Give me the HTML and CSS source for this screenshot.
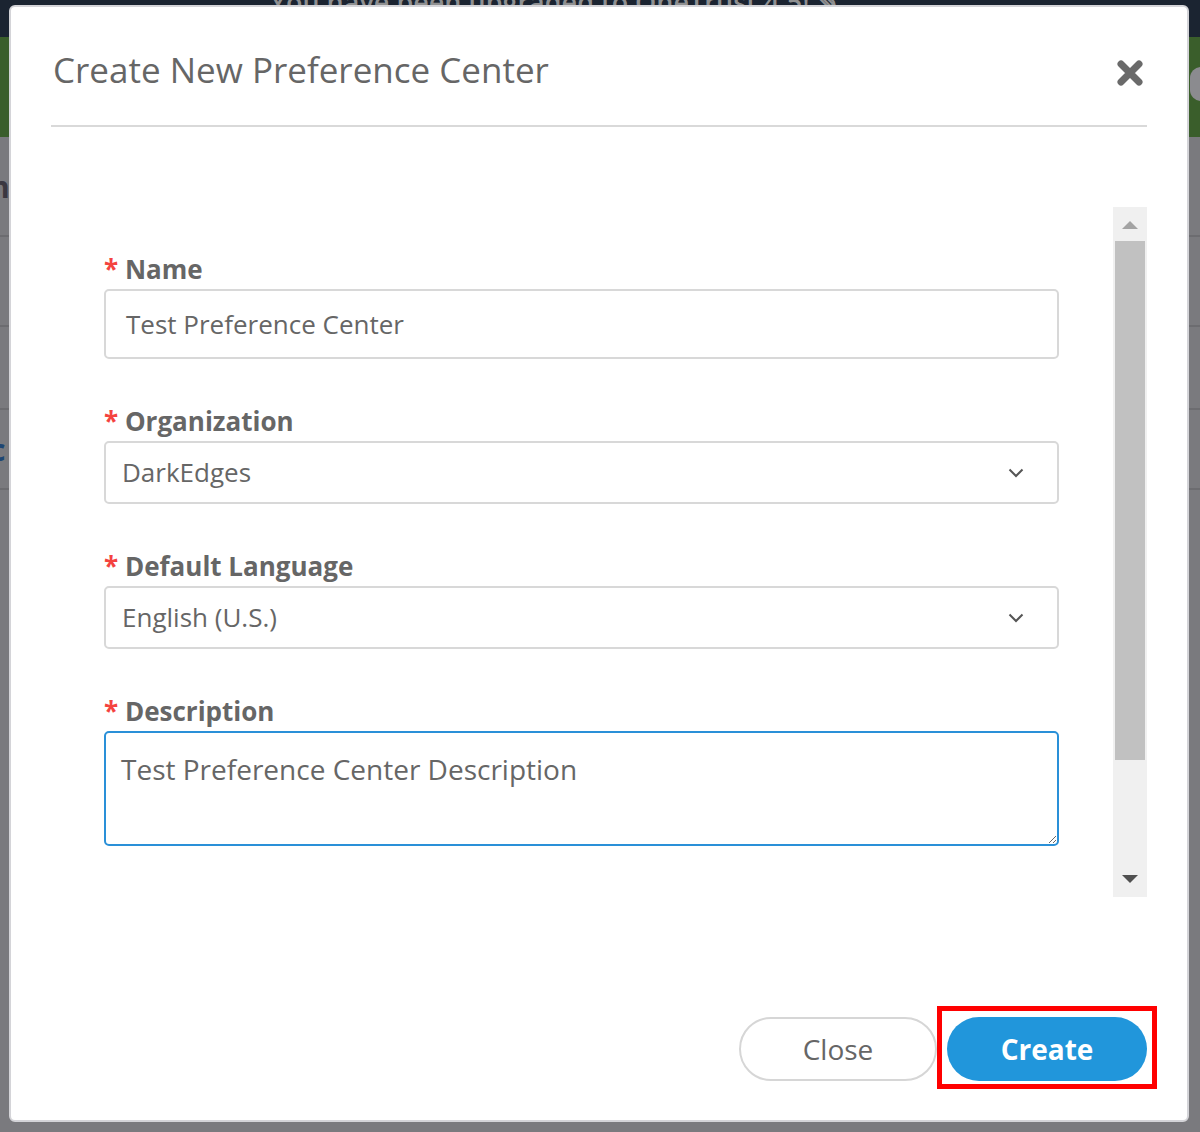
FILE: index.html
```html
<!DOCTYPE html>
<html lang="en">
<head>
<meta charset="utf-8">
<title>Create New Preference Center</title>
<link rel="stylesheet" href="styles.css">
</head>
<body>
<div class="page">
  <div class="topbar"><span class="notice">You have been upgraded to OneTrust 4.5! &#9998;</span></div>
  <div class="greenbar"><span class="user-icon"></span></div>
  <div class="row row-1"><span class="frag frag-n">n</span></div>
  <div class="row row-2"></div>
  <div class="row row-3"></div>
  <div class="row row-4"><span class="frag frag-c">c</span></div>
  <div class="rest"></div>
</div>

<div class="modal">
  <div class="modal-header">
    <h2 class="modal-title">Create New Preference Center</h2>
    <button class="close-x" aria-label="Close">
      <svg viewBox="0 0 26 26" width="26" height="26"><path d="M4 4 L22 22 M22 4 L4 22" stroke="#6a6a6a" stroke-width="7" stroke-linecap="round"/></svg>
    </button>
  </div>

  <div class="modal-body">
    <div class="form">
      <div class="field">
        <label class="field-label"><span class="req">*</span> Name</label>
        <div class="control control-input">Test Preference Center</div>
      </div>
      <div class="field">
        <label class="field-label"><span class="req">*</span> Organization</label>
        <div class="control control-select">DarkEdges
          <svg class="chevron" viewBox="0 0 16 10" width="16" height="10"><path d="M1.5 1.5 L8 8 L14.5 1.5" fill="none" stroke="#555" stroke-width="2"/></svg>
        </div>
      </div>
      <div class="field">
        <label class="field-label"><span class="req">*</span> Default Language</label>
        <div class="control control-select">English (U.S.)
          <svg class="chevron" viewBox="0 0 16 10" width="16" height="10"><path d="M1.5 1.5 L8 8 L14.5 1.5" fill="none" stroke="#555" stroke-width="2"/></svg>
        </div>
      </div>
      <div class="field">
        <label class="field-label"><span class="req">*</span> Description</label>
        <textarea class="control control-textarea">Test Preference Center Description</textarea>
      </div>
    </div>
    <div class="scrollbar">
      <span class="arrow-up"></span>
      <div class="thumb"></div>
      <span class="arrow-down"></span>
    </div>
  </div>

  <div class="modal-footer">
    <button class="btn btn-close">Close</button>
    <span class="highlight"><button class="btn btn-create">Create</button></span>
  </div>
</div>
</body>
</html>
```

FILE: styles.css
```css
* { box-sizing: border-box; }

html, body {
  margin: 0;
  padding: 0;
}

body {
  width: 1200px;
  height: 1132px;
  overflow: hidden;
  position: relative;
  font-family: "Open Sans", "Liberation Sans", sans-serif;
  background: #6f6e78;
}

/* ---------- dimmed page behind the modal ---------- */
.page {
  display: flex;
  flex-direction: column;
  height: 1132px;
}

.topbar {
  height: 37px;
  background: #1b2431;
  overflow: hidden;
  padding-left: 270px;
}

.notice {
  display: block;
  margin-top: -14px;
  font-size: 27px;
  font-weight: 600;
  color: #8f9091;
  white-space: nowrap;
  line-height: 32px;
}

.greenbar {
  height: 100px;
  background: #3a5e2b;
  position: relative;
}

.user-icon {
  position: absolute;
  left: 1190px;
  top: 30px;
  width: 22px;
  height: 34px;
  border-radius: 11px;
  background: #8b8b8f;
}

.row {
  background: #7a7a7e;
  border-bottom: 2px solid #6c6c70;
  overflow: hidden;
}

.row-1 { height: 100px; }
.row-2 { height: 90px; }
.row-3 { height: 83px; }
.row-4 { height: 80px; }

.rest {
  flex: 1;
  background: #7a7a7e;
}

.frag {
  display: block;
  font-size: 30px;
  font-weight: 700;
  line-height: 40px;
}

.frag-n {
  margin: 30px 0 0 -10px;
  color: #3b3740;
}

.frag-c {
  margin: 20px 0 0 -10px;
  color: #1e4673;
}

/* ---------- modal ---------- */
.modal {
  position: absolute;
  left: 9px;
  top: 5px;
  width: 1180px;
  height: 1117px;
  background: #fff;
  border: 2px solid #d4d4d8;
  border-radius: 6px;
  display: flex;
  flex-direction: column;
}

.modal-header {
  height: 120px;
  margin: 0 40px;
  padding: 8px 0 0 2px;
  border-bottom: 2px solid #d9d9d9;
  display: flex;
  align-items: center;
  justify-content: space-between;
}

.modal-title {
  margin: 0;
  font-size: 35px;
  font-weight: 400;
  line-height: 46px;
  color: #666;
}

.close-x {
  border: 0;
  background: none;
  padding: 0;
  width: 26px;
  height: 26px;
  margin: 6px 4px 0 0;
  display: block;
}

.close-x svg { display: block; }

.modal-body {
  display: flex;
  margin-top: 80px;
  padding-left: 93px;
}

.form {
  width: 955px;
  padding-top: 46px;
}

.field { margin-bottom: 46px; }

.field-label {
  display: block;
  font-size: 26px;
  font-weight: 700;
  line-height: 32px;
  color: #666;
  margin-bottom: 4px;
}

.req {
  color: #f4433f;
  font-weight: 700;
}

.control {
  display: block;
  width: 955px;
  border: 2px solid #d8d8d8;
  border-radius: 5px;
  font-family: "Open Sans", "Liberation Sans", sans-serif;
  font-size: 26px;
  color: #666;
  background: #fff;
}

.control-input {
  height: 70px;
  line-height: 66px;
  padding-left: 20px;
}

.control-select {
  height: 63px;
  line-height: 59px;
  padding-left: 16px;
  position: relative;
}

.chevron {
  position: absolute;
  right: 33px;
  top: 25px;
}

.control-textarea {
  height: 115px;
  border-color: #2a90d8;
  padding: 17px 15px 10px;
  font-size: 28px;
  line-height: 38px;
  resize: vertical;
  outline: none;
  margin: 0;
}

/* ---------- custom scrollbar ---------- */
.scrollbar {
  width: 34px;
  height: 690px;
  margin-left: 54px;
  background: #f0f0f0;
  position: relative;
  display: flex;
  flex-direction: column;
  align-items: center;
}

.arrow-up {
  display: block;
  margin-top: 14px;
  width: 0;
  height: 0;
  border-left: 8px solid transparent;
  border-right: 8px solid transparent;
  border-bottom: 8px solid #a3a3a3;
}

.thumb {
  margin-top: 12px;
  width: 30px;
  height: 519px;
  background: #c1c1c1;
}

.arrow-down {
  display: block;
  margin-top: 115px;
  width: 0;
  height: 0;
  border-left: 8px solid transparent;
  border-right: 8px solid transparent;
  border-top: 8px solid #505050;
}

/* ---------- footer ---------- */
.modal-footer {
  margin-top: auto;
  display: flex;
  justify-content: flex-end;
  align-items: center;
  gap: 10px;
  padding: 0 40px 39px 0;
}

.btn {
  height: 64px;
  border-radius: 32px;
  font-family: "Open Sans", "Liberation Sans", sans-serif;
  font-size: 28px;
  cursor: pointer;
  display: block;
}

.btn-close {
  width: 198px;
  background: #fff;
  border: 2px solid #d6d6d6;
  color: #666;
  font-weight: 400;
}

.highlight {
  position: relative;
  display: block;
}

.highlight::after {
  content: "";
  position: absolute;
  left: -10px;
  right: -10px;
  top: -11px;
  bottom: -8px;
  border: 5px solid #ff0000;
  pointer-events: none;
}

.btn-create {
  width: 200px;
  background: #2196db;
  border: 0;
  color: #fff;
  font-weight: 700;
}
```
